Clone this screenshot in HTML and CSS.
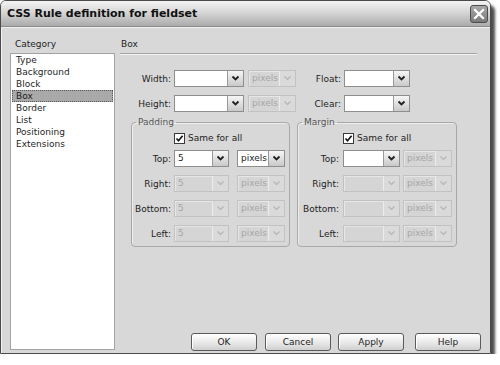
FILE: index.html
```html
<!DOCTYPE html>
<html>
<head>
  <meta charset="UTF-8">
  <title>CSS Rule definition for fieldset</title>
  <link rel="stylesheet" href="styles.css">
</head>
<body>
<div class="window">
  <div class="titlebar">
    <span class="title">CSS Rule definition for fieldset</span>
    <span class="close-btn">
      <svg width="14" height="14" viewBox="0 0 14 14"><path d="M3 3 L11 11 M11 3 L3 11" stroke="#fff" stroke-width="2.2" stroke-linecap="square"/></svg>
    </span>
  </div>

  <div class="client">
    <div class="category-col">
      <div class="col-label">Category</div>
      <ul class="category-list">
        <li>Type</li>
        <li>Background</li>
        <li>Block</li>
        <li class="selected">Box</li>
        <li>Border</li>
        <li>List</li>
        <li>Positioning</li>
        <li>Extensions</li>
      </ul>
    </div>

    <div class="panel-col">
      <div class="panel-head">Box</div>

      <div class="size-rows">
        <div class="form-row">
          <span class="lbl lbl-main">Width:</span>
          <div class="combo w-size"><span class="combo-text"></span><span class="combo-btn"><svg width="9" height="7" viewBox="0 0 9 7"><path d="M1.5 1.5 L4.5 4.5 L7.5 1.5"/></svg></span></div>
          <div class="combo off w-unit gap-4"><span class="combo-text">pixels</span><span class="combo-btn"><svg width="9" height="7" viewBox="0 0 9 7"><path d="M1.5 1.5 L4.5 4.5 L7.5 1.5"/></svg></span></div>
          <span class="lbl lbl-float">Float:</span>
          <div class="combo w-float"><span class="combo-text"></span><span class="combo-btn"><svg width="9" height="7" viewBox="0 0 9 7"><path d="M1.5 1.5 L4.5 4.5 L7.5 1.5"/></svg></span></div>
        </div>
        <div class="form-row">
          <span class="lbl lbl-main">Height:</span>
          <div class="combo w-size"><span class="combo-text"></span><span class="combo-btn"><svg width="9" height="7" viewBox="0 0 9 7"><path d="M1.5 1.5 L4.5 4.5 L7.5 1.5"/></svg></span></div>
          <div class="combo off w-unit gap-4"><span class="combo-text">pixels</span><span class="combo-btn"><svg width="9" height="7" viewBox="0 0 9 7"><path d="M1.5 1.5 L4.5 4.5 L7.5 1.5"/></svg></span></div>
          <span class="lbl lbl-float">Clear:</span>
          <div class="combo w-float"><span class="combo-text"></span><span class="combo-btn"><svg width="9" height="7" viewBox="0 0 9 7"><path d="M1.5 1.5 L4.5 4.5 L7.5 1.5"/></svg></span></div>
        </div>
      </div>

      <div class="groups">
        <fieldset class="group group-padding">
          <legend>Padding</legend>
          <div class="check-row"><span class="checkbox"><svg width="9" height="9" viewBox="0 0 9 9"><path d="M1.5 4.5 L3.5 6.8 L7.6 1.8"/></svg></span>Same for all</div>
          <div class="form-row">
            <span class="lbl">Top:</span>
            <div class="combo w-val"><span class="combo-text">5</span><span class="combo-btn"><svg width="9" height="7" viewBox="0 0 9 7"><path d="M1.5 1.5 L4.5 4.5 L7.5 1.5"/></svg></span></div>
            <div class="combo w-unit gap-8"><span class="combo-text">pixels</span><span class="combo-btn"><svg width="9" height="7" viewBox="0 0 9 7"><path d="M1.5 1.5 L4.5 4.5 L7.5 1.5"/></svg></span></div>
          </div>
          <div class="form-row">
            <span class="lbl">Right:</span>
            <div class="combo off w-val"><span class="combo-text">5</span><span class="combo-btn"><svg width="9" height="7" viewBox="0 0 9 7"><path d="M1.5 1.5 L4.5 4.5 L7.5 1.5"/></svg></span></div>
            <div class="combo off w-unit gap-8"><span class="combo-text">pixels</span><span class="combo-btn"><svg width="9" height="7" viewBox="0 0 9 7"><path d="M1.5 1.5 L4.5 4.5 L7.5 1.5"/></svg></span></div>
          </div>
          <div class="form-row">
            <span class="lbl">Bottom:</span>
            <div class="combo off w-val"><span class="combo-text">5</span><span class="combo-btn"><svg width="9" height="7" viewBox="0 0 9 7"><path d="M1.5 1.5 L4.5 4.5 L7.5 1.5"/></svg></span></div>
            <div class="combo off w-unit gap-8"><span class="combo-text">pixels</span><span class="combo-btn"><svg width="9" height="7" viewBox="0 0 9 7"><path d="M1.5 1.5 L4.5 4.5 L7.5 1.5"/></svg></span></div>
          </div>
          <div class="form-row">
            <span class="lbl">Left:</span>
            <div class="combo off w-val"><span class="combo-text">5</span><span class="combo-btn"><svg width="9" height="7" viewBox="0 0 9 7"><path d="M1.5 1.5 L4.5 4.5 L7.5 1.5"/></svg></span></div>
            <div class="combo off w-unit gap-8"><span class="combo-text">pixels</span><span class="combo-btn"><svg width="9" height="7" viewBox="0 0 9 7"><path d="M1.5 1.5 L4.5 4.5 L7.5 1.5"/></svg></span></div>
          </div>
        </fieldset>

        <fieldset class="group group-margin">
          <legend>Margin</legend>
          <div class="check-row"><span class="checkbox"><svg width="9" height="9" viewBox="0 0 9 9"><path d="M1.5 4.5 L3.5 6.8 L7.6 1.8"/></svg></span>Same for all</div>
          <div class="form-row">
            <span class="lbl">Top:</span>
            <div class="combo w-mval"><span class="combo-text"></span><span class="combo-btn"><svg width="9" height="7" viewBox="0 0 9 7"><path d="M1.5 1.5 L4.5 4.5 L7.5 1.5"/></svg></span></div>
            <div class="combo off w-munit"><span class="combo-text">pixels</span><span class="combo-btn"><svg width="9" height="7" viewBox="0 0 9 7"><path d="M1.5 1.5 L4.5 4.5 L7.5 1.5"/></svg></span></div>
          </div>
          <div class="form-row">
            <span class="lbl">Right:</span>
            <div class="combo off w-mval"><span class="combo-text"></span><span class="combo-btn"><svg width="9" height="7" viewBox="0 0 9 7"><path d="M1.5 1.5 L4.5 4.5 L7.5 1.5"/></svg></span></div>
            <div class="combo off w-munit"><span class="combo-text">pixels</span><span class="combo-btn"><svg width="9" height="7" viewBox="0 0 9 7"><path d="M1.5 1.5 L4.5 4.5 L7.5 1.5"/></svg></span></div>
          </div>
          <div class="form-row">
            <span class="lbl">Bottom:</span>
            <div class="combo off w-mval"><span class="combo-text"></span><span class="combo-btn"><svg width="9" height="7" viewBox="0 0 9 7"><path d="M1.5 1.5 L4.5 4.5 L7.5 1.5"/></svg></span></div>
            <div class="combo off w-munit"><span class="combo-text">pixels</span><span class="combo-btn"><svg width="9" height="7" viewBox="0 0 9 7"><path d="M1.5 1.5 L4.5 4.5 L7.5 1.5"/></svg></span></div>
          </div>
          <div class="form-row">
            <span class="lbl">Left:</span>
            <div class="combo off w-mval"><span class="combo-text"></span><span class="combo-btn"><svg width="9" height="7" viewBox="0 0 9 7"><path d="M1.5 1.5 L4.5 4.5 L7.5 1.5"/></svg></span></div>
            <div class="combo off w-munit"><span class="combo-text">pixels</span><span class="combo-btn"><svg width="9" height="7" viewBox="0 0 9 7"><path d="M1.5 1.5 L4.5 4.5 L7.5 1.5"/></svg></span></div>
          </div>
        </fieldset>
      </div>

      <div class="buttons">
        <button class="btn">OK</button>
        <button class="btn">Cancel</button>
        <button class="btn">Apply</button>
        <button class="btn btn-help">Help</button>
      </div>
    </div>
  </div>
</div>
</body>
</html>
```

FILE: styles.css
```css
body {
  margin: 0;
  background: #fff;
  font-family: "DejaVu Sans", Verdana, sans-serif;
  font-size: 9px;
  color: #1e1e1e;
}

.window {
  width: 491px;
  height: 354px;
  box-sizing: border-box;
  border: 1px solid #4a4a4a;
  border-radius: 6px 6px 0 0;
  box-shadow: 4px 5px 3px rgba(0, 0, 0, 0.7);
  display: flex;
  flex-direction: column;
  overflow: hidden;
}

.titlebar {
  height: 26px;
  flex: none;
  display: flex;
  align-items: center;
  justify-content: space-between;
  padding: 0 2px 0 6px;
  background: linear-gradient(#f4f4f4, #d6d6d6 45%, #ababab);
  border-bottom: 1px solid #8a8a8a;
  box-sizing: border-box;
}

.title {
  font-size: 11px;
  font-weight: bold;
  color: #111;
}

.close-btn {
  width: 18px;
  height: 18px;
  box-sizing: border-box;
  border: 1px solid #4c4c4c;
  border-radius: 3px;
  background: linear-gradient(#a9a9a9, #7a7a7a);
  display: flex;
  align-items: center;
  justify-content: center;
}

.client {
  flex: 1;
  display: flex;
  gap: 5px;
  padding: 10px 8px 2px 8px;
  background: #d8d8d8;
  border-top: 1px solid #efefef;
  border-left: 1px solid #f2f2f2;
}

/* category list */
.category-col {
  width: 105px;
  display: flex;
  flex-direction: column;
}

.col-label {
  line-height: 12px;
  padding-left: 5px;
  margin-bottom: 3px;
}

.category-list {
  flex: 1;
  list-style: none;
  margin: 0 0 1px;
  padding: 0 1px;
  background: #fff;
  border: 1px solid #a2a2a2;
}

.category-list li {
  line-height: 10px;
  height: 10px;
  padding: 0 3px;
  border: 1px solid transparent;
}

.category-list .selected {
  background: #a9a9a9;
  border: 1px dotted #555;
}

/* right panel */
.panel-col {
  width: 361px;
  display: flex;
  flex-direction: column;
}

.panel-head {
  line-height: 12px;
  padding: 0 0 3px 1px;
  margin-right: 4px;
  border-bottom: 1px solid #a4a4a4;
  box-shadow: 0 1px 0 #f2f2f2;
}

.size-rows {
  margin-top: 16px;
  display: flex;
  flex-direction: column;
  gap: 8px;
}

.form-row {
  display: flex;
  align-items: center;
  height: 17px;
}

.lbl {
  text-align: right;
  margin-right: 3px;
}

.lbl-main {
  width: 51px;
}

.lbl-float {
  width: 45px;
}

/* combo boxes */
.combo {
  height: 17px;
  box-sizing: border-box;
  display: flex;
  align-items: stretch;
  background: #fff;
  border: 1px solid #8e8e8e;
}

.combo-text {
  flex: 1;
  padding-left: 3px;
  line-height: 15px;
  overflow: hidden;
}

.combo-btn {
  width: 15px;
  flex: none;
  display: flex;
  align-items: center;
  justify-content: center;
  border-left: 1px solid #9a9a9a;
  background: linear-gradient(#f6f6f6, #c9c9c9);
}

.combo-btn path {
  fill: none;
  stroke: #222;
  stroke-width: 1.9;
}

.combo.off {
  background: #d5d5d5;
  border-color: #c2c2c2;
  box-shadow: inset 1px 1px 0 #e6e6e6;
}

.combo.off .combo-text {
  color: #a6a6a6;
}

.combo.off .combo-btn {
  background: #dadada;
  border-left: 1px solid #ececec;
}

.combo.off .combo-btn path {
  stroke: #b4b4b4;
  stroke-width: 1.2;
}

.w-size { width: 70px; }
.w-unit { width: 48px; }
.w-float { width: 66px; }
.w-val { width: 55px; }
.w-mval { width: 57px; }
.w-munit { width: 49px; margin-left: 3px; }
.gap-4 { margin-left: 4px; }
.gap-8 { margin-left: 8px; }

/* padding / margin groups */
.groups {
  display: flex;
  gap: 7px;
  margin: 5px 0 0 11px;
}

.group {
  margin: 0;
  padding: 0 0 4px;
  border: 1px solid #a8a8a8;
  border-radius: 4px;
  box-shadow: inset 1px 1px 0 #ececec;
  display: flex;
  flex-direction: column;
  gap: 8px;
}

.group-padding { width: 159px; box-sizing: border-box; }
.group-margin { width: 160px; box-sizing: border-box; }

.group legend {
  padding: 0 2px;
  margin-left: 4px;
  line-height: 11px;
  color: #555;
}

.group-padding .lbl { width: 39px; }
.group-margin .lbl { width: 41px; margin-right: 4px; }

.check-row {
  display: flex;
  align-items: center;
  height: 12px;
  margin-top: 4px;
  margin-bottom: -2px;
}

.group-padding .check-row { padding-left: 42px; }
.group-margin .check-row { padding-left: 45px; }

.checkbox {
  width: 11px;
  height: 11px;
  box-sizing: border-box;
  border: 1px solid #3a3a3a;
  background: #fff;
  margin-right: 3px;
  display: flex;
  align-items: center;
  justify-content: center;
}

.checkbox path {
  fill: none;
  stroke: #111;
  stroke-width: 1.6;
}

/* dialog buttons */
.buttons {
  margin-top: auto;
  display: flex;
  justify-content: flex-end;
  gap: 7px;
}

.btn {
  width: 66px;
  height: 18px;
  padding: 0;
  font-family: inherit;
  font-size: 9px;
  color: #1e1e1e;
  border: 1px solid #5a5a5a;
  border-radius: 3px;
  background: linear-gradient(#ffffff, #e6e6e6 60%, #cfcfcf);
  box-shadow: inset 1px 1px 0 #fff;
}

.btn:first-child {
  margin-right: 1px;
}

.btn-help {
  margin-left: 4px;
}
```
